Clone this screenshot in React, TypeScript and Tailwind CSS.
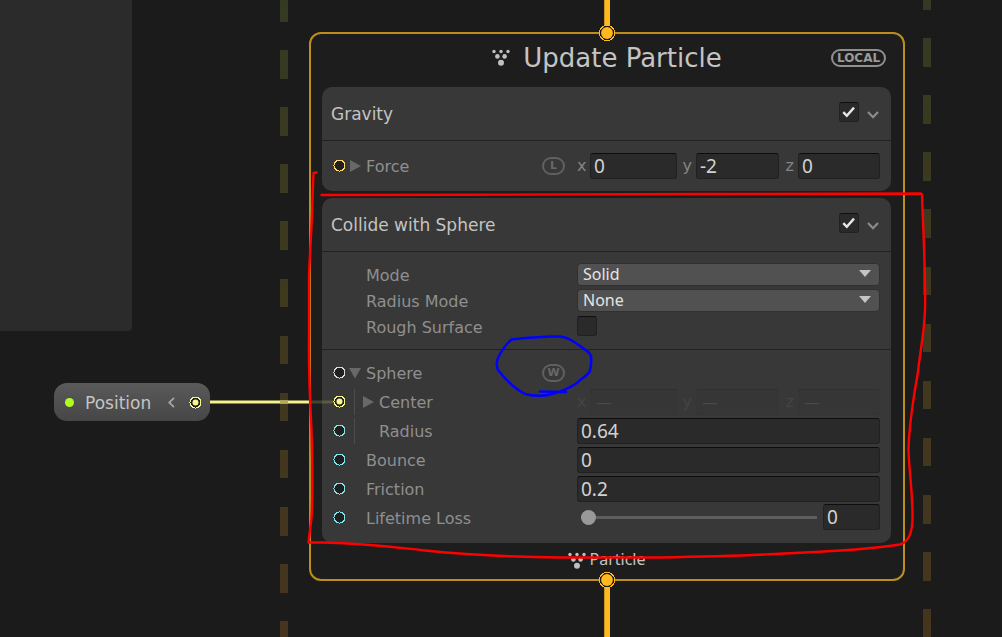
import React, { useState } from "react";

const labelFont = "font-['DejaVu_Sans',Verdana,sans-serif]";
const valueFont = "font-['Noto_Sans',sans-serif]";

function ParticleIcon() {
  return (
    <svg width="20" height="18" viewBox="0 0 20 18" fill="#c0c0c0" aria-hidden="true">
      <circle cx="3" cy="2.5" r="1.7" />
      <circle cx="10" cy="2.5" r="1.7" />
      <circle cx="17" cy="2.5" r="1.7" />
      <circle cx="6.4" cy="7.4" r="2.3" />
      <circle cx="13.6" cy="7.4" r="2.3" />
      <circle cx="10" cy="13.8" r="3" />
    </svg>
  );
}

function Port({ color, linked = false }: { color: string; linked?: boolean }) {
  return (
    <svg className="shrink-0" width="13" height="13" viewBox="0 0 13 13" aria-hidden="true">
      <circle cx="6.5" cy="6.5" r="5.5" fill="#202020" stroke={color} strokeWidth="1" shapeRendering="crispEdges" />
      {linked && <circle cx="6.5" cy="6.5" r="3" fill={color} />}
    </svg>
  );
}

function FlowAnchor() {
  return (
    <svg width="18" height="18" viewBox="0 0 18 18" aria-hidden="true">
      <circle cx="9" cy="9" r="7.6" fill="#1b1b1b" stroke="#ffb91f" strokeWidth="1" shapeRendering="crispEdges" />
      <circle cx="9" cy="9" r="5.9" fill="#ffb91f" />
    </svg>
  );
}

function Arrow({ open = false }: { open?: boolean }) {
  return (
    <svg width="12" height="12" viewBox="0 0 12 12" fill="#686868" aria-hidden="true">
      {open ? <path d="M0 1H12L6 11.5Z" /> : <path d="M1 0L12 6L1 12Z" />}
    </svg>
  );
}

function SpaceBadge({ letter }: { letter: string }) {
  return (
    <button
      type="button"
      className="flex h-[18px] w-[23px] items-center justify-center rounded-full border-2 border-[#606060] text-[11px] leading-none font-bold text-[#686868]"
    >
      {letter}
    </button>
  );
}

function Check({ label, initial }: { label: string; initial: boolean }) {
  const [on, setOn] = useState(initial);
  return (
    <span className="grid h-5 w-5 place-items-center">
      <input
        type="checkbox"
        aria-label={label}
        checked={on}
        onChange={() => setOn(!on)}
        className="col-start-1 row-start-1 h-5 w-5 appearance-none rounded-[3px] border border-[#212121] border-t-[#0f0f0f] bg-[#2a2a2a]"
      />
      {on && (
        <svg className="pointer-events-none col-start-1 row-start-1" width="14" height="14" viewBox="0 0 14 14" fill="none" stroke="#e8e8e8" strokeWidth="2.4" aria-hidden="true">
          <path d="M1.300 7.200L4.800 10.800L12 2.600" />
        </svg>
      )}
    </span>
  );
}

function TextField({ label, value }: { label: string; value: string }) {
  return (
    <input
      type="text"
      aria-label={label}
      defaultValue={value}
      className={`${valueFont} h-[26px] w-full min-w-0 rounded-[3px] border border-[#212121] border-t-[#0d0d0d] bg-[#2a2a2a] px-[3px] text-[19px] leading-6 text-[#d2d2d2]`}
    />
  );
}

function Vector({ name, values, disabled = false }: { name: string; values: string[]; disabled?: boolean }) {
  return (
    <div className="grid grid-cols-[13px_87fr_19px_83fr_19px_82fr] items-center">
      {["x", "y", "z"].map((axis, i) => (
        <React.Fragment key={axis}>
          <span className={`pr-1 text-right text-[16px] leading-5 ${disabled ? "text-[#444444]" : "text-[#858585]"}`}>{axis}</span>
          {disabled ? (
            <input
              type="text"
              disabled
              aria-label={`${name} ${axis}`}
              defaultValue={values[i]}
              className={`${valueFont} h-[26px] w-full min-w-0 rounded-[3px] border border-[#353535] border-t-[#303030] bg-[#363636] px-[5px] text-[16px] leading-6 text-[#484848]`}
            />
          ) : (
            <TextField label={`${name} ${axis}`} value={values[i]} />
          )}
        </React.Fragment>
      ))}
    </div>
  );
}

function Dropdown({ id, options }: { id: string; options: string[] }) {
  return (
    <div className="grid items-center">
      <select
        id={id}
        className={`${valueFont} col-start-1 row-start-1 h-[23px] w-full appearance-none rounded-[4px] border border-[#303030] bg-[#515151] px-[5px] text-[16px] leading-5 text-[#e4e4e4]`}
      >
        {options.map((o) => (
          <option key={o}>{o}</option>
        ))}
      </select>
      <svg className="pointer-events-none col-start-1 row-start-1 mr-[9px] mb-[2px] justify-self-end" width="12" height="7" viewBox="0 0 12 7" fill="#c4c4c4" aria-hidden="true">
        <path d="M0 0H12L6 7Z" />
      </svg>
    </div>
  );
}

function BlockHeader({ title }: { title: string }) {
  return (
    <header className="flex h-[54px] items-center border-b border-[#222222] pr-3 pl-[9px]">
      <h2 className="grow text-[17px] leading-6 text-[#c4c4c4]">{title}</h2>
      <div className="pb-[3px]">
        <Check label={`Enable ${title}`} initial={true} />
      </div>
      <button type="button" aria-label={`Collapse ${title}`} className="ml-2 pt-[2px]">
        <svg width="12" height="8" viewBox="0 0 12 8" fill="none" stroke="#8c8c8c" strokeWidth="2.2" aria-hidden="true">
          <path d="M1 1L6 6.2L11 1" />
        </svg>
      </button>
    </header>
  );
}

type RowProps = {
  label: string;
  port: string;
  linked?: boolean;
  fold?: "open" | "closed";
  nested?: boolean;
  space?: string;
  children?: React.ReactNode;
};

function Row({ label, port, linked, fold, nested, space, children }: RowProps) {
  return (
    <div className="grid h-[29px] grid-cols-[255px_1fr] items-center pr-[11px]">
      <div className="flex h-full items-center pr-3 pl-[11px]">
        <Port color={port} linked={linked} />
        {nested ? (
          <span className="ml-2 flex h-[26px] w-[25px] items-center justify-end border-l border-[#4d4d4d] pr-[5px]">{fold && <Arrow />}</span>
        ) : (
          <span className="ml-[3px] flex w-[17px] items-center">{fold && <Arrow open={fold === "open"} />}</span>
        )}
        <span className="grow pt-[2px] text-[16px] leading-5 text-[#8f8f8f]">{label}</span>
        {space && <SpaceBadge letter={space} />}
      </div>
      {children}
    </div>
  );
}

function Setting({ label, id, children }: { label: string; id?: string; children: React.ReactNode }) {
  return (
    <div className="grid h-[26px] grid-cols-[211px_1fr] items-center pr-[11px] pl-11">
      <label htmlFor={id} className="pt-[3px] text-[16px] leading-5 text-[#8f8f8f]">
        {label}
      </label>
      {children}
    </div>
  );
}

function Dashes({ x, start }: { x: string; start: number }) {
  return <path d={`M${x} ${start}V660`} stroke="url(#scope)" strokeWidth="8" strokeDasharray="28.6 28.5" />;
}

export default function App() {
  return (
    <main className={`${labelFont} relative min-h-screen w-full overflow-hidden bg-[#1b1b1b]`}>
      <div className="absolute top-0 left-0 h-[331px] w-[132px] rounded-br bg-[#2b2b2b]" />

      <svg className="absolute top-0 left-0" width="1002" height="637" viewBox="0 0 1002 637" fill="none" aria-hidden="true">
        <defs>
          <linearGradient id="scope" gradientUnits="userSpaceOnUse" x1="0" y1="0" x2="0" y2="637">
            <stop offset="0" stopColor="#343a22" />
            <stop offset="0.5" stopColor="#40391e" />
            <stop offset="1" stopColor="#45341e" />
          </linearGradient>
        </defs>
        <g shapeRendering="crispEdges">
          <Dashes x="284" start={-7} />
          <Dashes x="927" start={-19} />
        </g>
        <path d="M208 402H310" stroke="#f4f48c" strokeWidth="3" />
        <path d="M280 402H288" stroke="#b5ac62" strokeWidth="3" />
        <path d="M607 0V33M607 580V637" stroke="#ffb91f" strokeWidth="6" />
        <path d="M604.5 0V33M604.5 580V637" stroke="#c79420" strokeWidth="1" />
      </svg>

      <div className="absolute top-[383px] left-[54px] flex h-[38px] w-[156px] items-center rounded-[13px] bg-linear-to-b from-[#5a5a5a] to-[#464646] pr-2 pl-[11px]">
        <span className="h-[9px] w-[9px] rounded-full bg-[#aeff1f]" />
        <span className="ml-[11px] grow pt-[2px] text-[17px] leading-5 text-[#c4c4c4]">Position</span>
        <button type="button" aria-label="Collapse Position" className="mr-[14px]">
          <svg width="7" height="11" viewBox="0 0 7 11" fill="none" stroke="#a5a5a5" strokeWidth="1.8" aria-hidden="true">
            <path d="M6 0.8L1.2 5.5L6 10.2" />
          </svg>
        </button>
        <Port color="#f6f58f" linked />
      </div>

      <section className="absolute top-8 left-[309px] w-[596px] rounded-xl border-2 border-[#bb8e1e] bg-[#1d1d1d] pr-3 pl-[11px]">
        <header className="mb-[5px] grid h-12 grid-cols-[1fr_auto_1fr] items-center">
          <span />
          <h1 className="flex items-center gap-3 text-[26px] leading-8 text-[#c4c4c4]">
            <ParticleIcon />
            Update Particle
          </h1>
          <button type="button" className="mr-[5px] flex h-[18px] w-[55px] items-center justify-center justify-self-end rounded-full border-2 border-[#8f8f8f] text-[12px] leading-none font-bold text-[#9a9a9a]">
            LOCAL
          </button>
        </header>

        <article className="rounded-[10px] bg-[#383838] pb-[11px]">
          <BlockHeader title="Gravity" />
          <div className="pt-[10px]">
            <Row label="Force" port="#ffd76e" fold="closed" space="L">
              <Vector name="Force" values={["0", "-2", "0"]} />
            </Row>
          </div>
        </article>

        <article className="mt-[7px] rounded-[10px] bg-[#383838] pb-[11px]">
          <BlockHeader title="Collide with Sphere" />
          <div className="border-b border-[#222222] pt-[9px] pb-[10px]">
            <Setting label="Mode" id="mode">
              <Dropdown id="mode" options={["Solid", "Inverted"]} />
            </Setting>
            <Setting label="Radius Mode" id="radius-mode">
              <Dropdown id="radius-mode" options={["None", "From Size", "Custom"]} />
            </Setting>
            <Setting label="Rough Surface">
              <Check label="Rough Surface" initial={false} />
            </Setting>
          </div>
          <div className="pt-2">
            <Row label="Sphere" port="#d8d8d8" fold="open" space="W" />
            <Row label="Center" port="#f6f58f" linked fold="closed" nested>
              <Vector name="Center" values={["—", "—", "—"]} disabled />
            </Row>
            <Row label="Radius" port="#84e4e7" nested>
              <TextField label="Radius" value="0.64" />
            </Row>
            <Row label="Bounce" port="#84e4e7">
              <TextField label="Bounce" value="0" />
            </Row>
            <Row label="Friction" port="#84e4e7">
              <TextField label="Friction" value="0.2" />
            </Row>
            <Row label="Lifetime Loss" port="#84e4e7">
              <div className="flex items-center">
                <input
                  type="range"
                  aria-label="Lifetime Loss"
                  min={0}
                  max={1}
                  step={0.01}
                  defaultValue={0}
                  className="mr-[6px] ml-1 h-4 min-w-0 grow appearance-none bg-transparent [&::-webkit-slider-runnable-track]:h-[3px] [&::-webkit-slider-runnable-track]:bg-[#5e5e5e] [&::-webkit-slider-thumb]:-mt-[6px] [&::-webkit-slider-thumb]:h-[15px] [&::-webkit-slider-thumb]:w-[15px] [&::-webkit-slider-thumb]:appearance-none [&::-webkit-slider-thumb]:rounded-full [&::-webkit-slider-thumb]:bg-[#999999]"
                />
                <div className="w-[57px]">
                  <TextField label="Lifetime Loss value" value="0" />
                </div>
              </div>
            </Row>
          </div>
        </article>

        <footer className={`${valueFont} mb-1 flex h-8 items-center justify-center gap-[2px] text-[16px] leading-5 text-[#c4c4c4]`}>
          <span className="pt-1">
            <ParticleIcon />
          </span>
          Particle
        </footer>
      </section>

      <div className="absolute top-6 left-[598px]">
        <FlowAnchor />
      </div>
      <div className="absolute top-[571px] left-[598px]">
        <FlowAnchor />
      </div>

      <svg className="pointer-events-none absolute top-0 left-0" width="1002" height="637" viewBox="0 0 1002 637" fill="none" strokeLinejoin="round" strokeLinecap="round" aria-hidden="true">
        <path d="M311 402H333" stroke="#f4f48c" strokeOpacity="0.18" strokeWidth="3" />
        <g stroke="#ff0000" strokeWidth="2.4">
          <path d="M316.500 172.500L313.500 173L312.500 200C312 225 310 250 309 275V340C308.500 375 310 400 311.500 430C312.500 465 312.500 500 311.500 518L308.500 542.500H325C370 543.500 400 548 425 550.500C460 554 510 557 560 557.500H660C720 556.500 750 555.500 785 553.500C830 551.500 870 549.500 900 544.500C909 542 912 533 912.500 520C913 495 909 470 908.500 450C909 422 914 395 918 372C920 352 924 335 925 310C926 285 924 250 922 194.500L921 193.500L700 194C560 194.500 450 195 321.500 195" />
        </g>
        <path d="M511.500 339.500L525 338L550 336.500H561C570 338 574 342 580 346C585 350 590 352 591 356C592 365 590 368 590 371C587 376 582 378 577 383C568 389 560 392 552 394C545 396 535 396.500 525 394C515 389 505 379 498 370C496 366 497 360 498.500 357C502 350 506 344 511.500 339.500ZM540 391.500L566 392" stroke="#0000ff" strokeWidth="2.5" />
      </svg>
    </main>
  );
}
